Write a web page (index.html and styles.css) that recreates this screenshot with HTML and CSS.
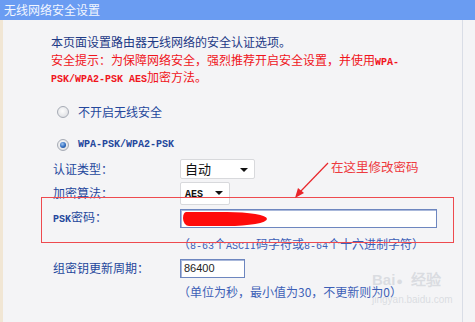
FILE: index.html
```html
<!DOCTYPE html>
<html lang="zh-CN">
<head>
<meta charset="utf-8">
<link rel="stylesheet" href="styles.css">
</head>
<body>
<div class="page">
  <div class="header">无线网络安全设置</div>
  <div class="content">
    <div class="intro">
      <div class="navy">本页面设置路由器无线网络的安全认证选项。</div>
      <div class="red">安全提示：为保障网络安全，强烈推荐开启安全设置，并使用<span class="lat">WPA-</span></div>
      <div class="red"><span class="lat">PSK/WPA2-PSK AES</span>加密方法。</div>
    </div>

    <div class="radio-row first">
      <span class="radio"></span>
      <span class="label">不开启无线安全</span>
    </div>
    <div class="radio-row second">
      <span class="radio checked"></span>
      <span class="label lat">WPA-PSK/WPA2-PSK</span>
    </div>

    <div class="form">
      <div class="row r-auth">
        <span class="flabel">认证类型：</span>
        <span class="select w-auth">自动<i class="caret"></i></span>
      </div>
      <div class="row r-enc">
        <span class="flabel">加密算法：</span>
        <span class="select w-enc"><span class="lat aes">AES</span><i class="caret"></i></span>
      </div>
      <div class="row r-psk">
        <span class="flabel"><span class="lat">PSK</span>密码：</span>
        <span class="input w-psk"><span class="scribble"></span></span>
      </div>
      <div class="hint h1">（<span class="lat">8-63</span>个<span class="lat">ASCII</span>码字符或<span class="lat">8-64</span>个十六进制字符）</div>
      <div class="row r-key">
        <span class="flabel">组密钥更新周期：</span>
        <span class="input w-key">86400</span>
      </div>
      <div class="hint h2">（单位为秒，最小值为30，不更新则为0）</div>
    </div>
  </div>

  <div class="mark-box"></div>
  <svg class="arrow" width="40" height="40" viewBox="0 0 40 40">
    <line x1="36" y1="2" x2="8" y2="31" stroke="#e8262b" stroke-width="1.2"/>
    <polygon points="3,37 6,27 12,32" fill="#e8262b"/>
  </svg>
  <div class="note">在这里修改密码</div>
  <div class="watermark">
    <div class="wm1">Bai<span class="paw">●</span>经验</div>
    <div class="wm2">jingyan.baidu.com</div>
  </div>
</div>
</body>
</html>
```

FILE: styles.css
```css
* { box-sizing: border-box; }
html, body {
  margin: 0;
  padding: 0;
  background: #f4f4f6;
}
.page {
  position: relative;
  width: 475px;
  height: 322px;
  overflow: hidden;
  font-family: "Noto Sans CJK SC", "Liberation Sans", sans-serif;
  font-size: 12px;
  background: #f4f4f6;
}
.header {
  height: 20px;
  line-height: 19px;
  padding-left: 4px;
  background: #6a9cf2;
  color: #f2f6ff;
  font-size: 12px;
}
.content {
  border-left: 3px solid #f1e6d4;
  border-right: 1px solid #d9dde6;
  width: 463px;
  height: 302px;
  padding-left: 48px;
  padding-top: 13px;
}
.lat {
  font-family: "Liberation Mono", monospace;
  font-size: 10px;
  font-weight: bold;
}
.intro div {
  line-height: 17.5px;
  height: 17.5px;
}
.navy { color: #1d3a86; }
.red { color: #f0141c; }

.radio-row {
  display: flex;
  align-items: center;
  height: 18px;
  padding-left: 6px;
  gap: 9px;
  color: #24479c;
}
.radio-row.first { margin-top: 17px; }
.radio-row.second { margin-top: 15px; }
.radio {
  width: 12px;
  height: 12px;
  border-radius: 50%;
  border: 1px solid #a6abb5;
  background: radial-gradient(circle at 45% 40%, #fdfdfd 0, #e6e7ea 60%, #cfd2d8 100%);
  position: relative;
}
.radio.checked::after {
  content: "";
  position: absolute;
  left: 2px;
  top: 2px;
  width: 6px;
  height: 6px;
  border-radius: 50%;
  background: radial-gradient(circle at 40% 35%, #9fc4ef 0, #2f6cc0 55%, #1b3f7c 100%);
}
.radio-row .label.lat { color: #24479c; }

.form { padding-left: 2px; }
.row {
  display: grid;
  grid-template-columns: 127px auto;
  align-items: center;
  color: #24479c;
}
.flabel { line-height: 16px; }
.r-auth { margin-top: 5px; height: 20px; }
.r-enc { margin-top: 3px; height: 19px; }
.r-psk { margin-top: 8px; height: 19px; }
.r-key { margin-top: 7px; height: 19px; }

.select {
  position: relative;
  display: block;
  height: 100%;
  background: #ffffff;
  border: 1px solid #d8d9dc;
  border-radius: 2px;
  color: #111;
  font-size: 13px;
  line-height: 18px;
  padding-left: 4px;
}
.w-auth { width: 75px; }
.w-enc { width: 50px; }
.aes { color: #111; font-size: 10px; }
.caret {
  position: absolute;
  right: 6px;
  top: 8px;
  width: 0;
  height: 0;
  border-left: 4px solid transparent;
  border-right: 4px solid transparent;
  border-top: 4px solid #111;
}
.input {
  position: relative;
  display: block;
  height: 100%;
  background: #fff;
  border: 1px solid #6d86bf;
  box-shadow: inset 1px 1px 0 #a9b8da;
  color: #222;
  font-family: "Liberation Sans", sans-serif;
  font-size: 11px;
  line-height: 17px;
  padding-left: 3px;
}
.w-psk { width: 257px; }
.w-key { width: 65px; }
.scribble {
  position: absolute;
  left: 2px;
  top: 2px;
  width: 84px;
  height: 14px;
  background: #ff0b0b;
  border-radius: 3px 40px 40px 6px / 6px 50% 50% 8px;
}
.hint {
  margin-left: 125px;
  line-height: 16px;
  height: 16px;
  color: #3d5fb6;
}
.hint .lat { font-weight: normal; }
.h1 { margin-top: 8px; }
.h2 { margin-top: 6px; }

.mark-box {
  position: absolute;
  left: 41px;
  top: 197px;
  width: 413px;
  height: 46px;
  border: 1px solid #ee4a4f;
  pointer-events: none;
}
.arrow {
  position: absolute;
  left: 292px;
  top: 161px;
}
.note {
  position: absolute;
  left: 331px;
  top: 158px;
  color: #ee3a3f;
  font-size: 12.5px;
  line-height: 18px;
}
.watermark {
  position: absolute;
  left: 372px;
  top: 270px;
  color: rgba(210, 212, 218, 0.75);
  font-family: "Liberation Sans", sans-serif;
}
.wm1 { font-size: 15px; font-weight: bold; line-height: 20px; }
.paw { font-size: 11px; margin: 0 8px 0 1px; }
.wm2 { font-size: 10px; line-height: 14px; margin-top: 2px; }
```
